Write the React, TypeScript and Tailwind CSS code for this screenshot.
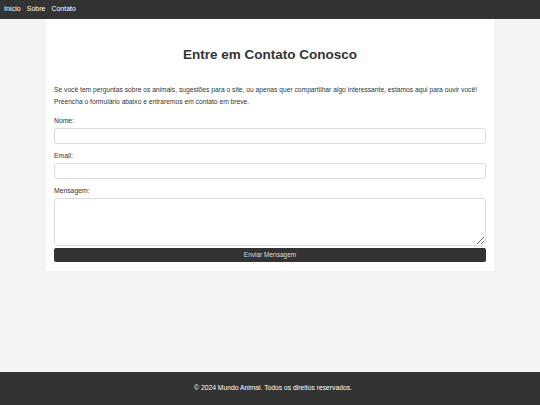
const App = () => {
  return (
    <div
      className="min-h-screen flex flex-col bg-[#f4f4f4] text-[#333]"
      style={{ fontFamily: '"Liberation Sans", Arial, sans-serif' }}
    >
      <header className="h-[19px] bg-[#333] flex items-center px-[4px] gap-[6px] text-[7px] text-white">
        <a href="#">Início</a>
        <a href="#">Sobre</a>
        <a href="#">Contato</a>
      </header>

      <main className="w-[448px] mx-auto bg-white px-[8px] pt-[26px] pb-[9px]">
        <h2 className="text-[13.5px] leading-[20px] font-bold text-center">
          Entre em Contato Conosco
        </h2>
        <p className="mt-[19px] text-[6.7px] leading-[12px]">
          Se você tem perguntas sobre os animais, sugestões para o site, ou apenas quer compartilhar algo
          interessante, estamos aqui para ouvir você! Preencha o formulário abaixo e entraremos em contato em breve.
        </p>

        <form className="mt-[8px] flex flex-col">
          <label className="block text-[6.8px] leading-[10px]">Nome:</label>
          <input
            type="text"
            className="mt-[2px] h-[16px] w-full border border-[#ddd] rounded-[3px] bg-white"
          />
          <label className="block mt-[6.5px] text-[6.8px] leading-[10px]">Email:</label>
          <input
            type="email"
            className="mt-[2.5px] h-[16px] w-full border border-[#ddd] rounded-[3px] bg-white"
          />
          <label className="block mt-[6.5px] text-[6.8px] leading-[10px]">Mensagem:</label>
          <textarea className="mt-[2.5px] h-[48px] w-full border border-[#ddd] rounded-[3px] bg-white" />
          <button
            type="submit"
            className="mt-[2px] h-[14px] w-full bg-[#333] text-[#ddd] text-[6.5px] rounded-[2px]"
          >
            Enviar Mensagem
          </button>
        </form>
      </main>

      <footer className="mt-auto h-[33px] bg-[#333] text-white text-[6.75px] flex items-center justify-center pl-[6px]">
        © 2024 Mundo Animal. Todos os direitos reservados.
      </footer>
    </div>
  );
};

export default App;
